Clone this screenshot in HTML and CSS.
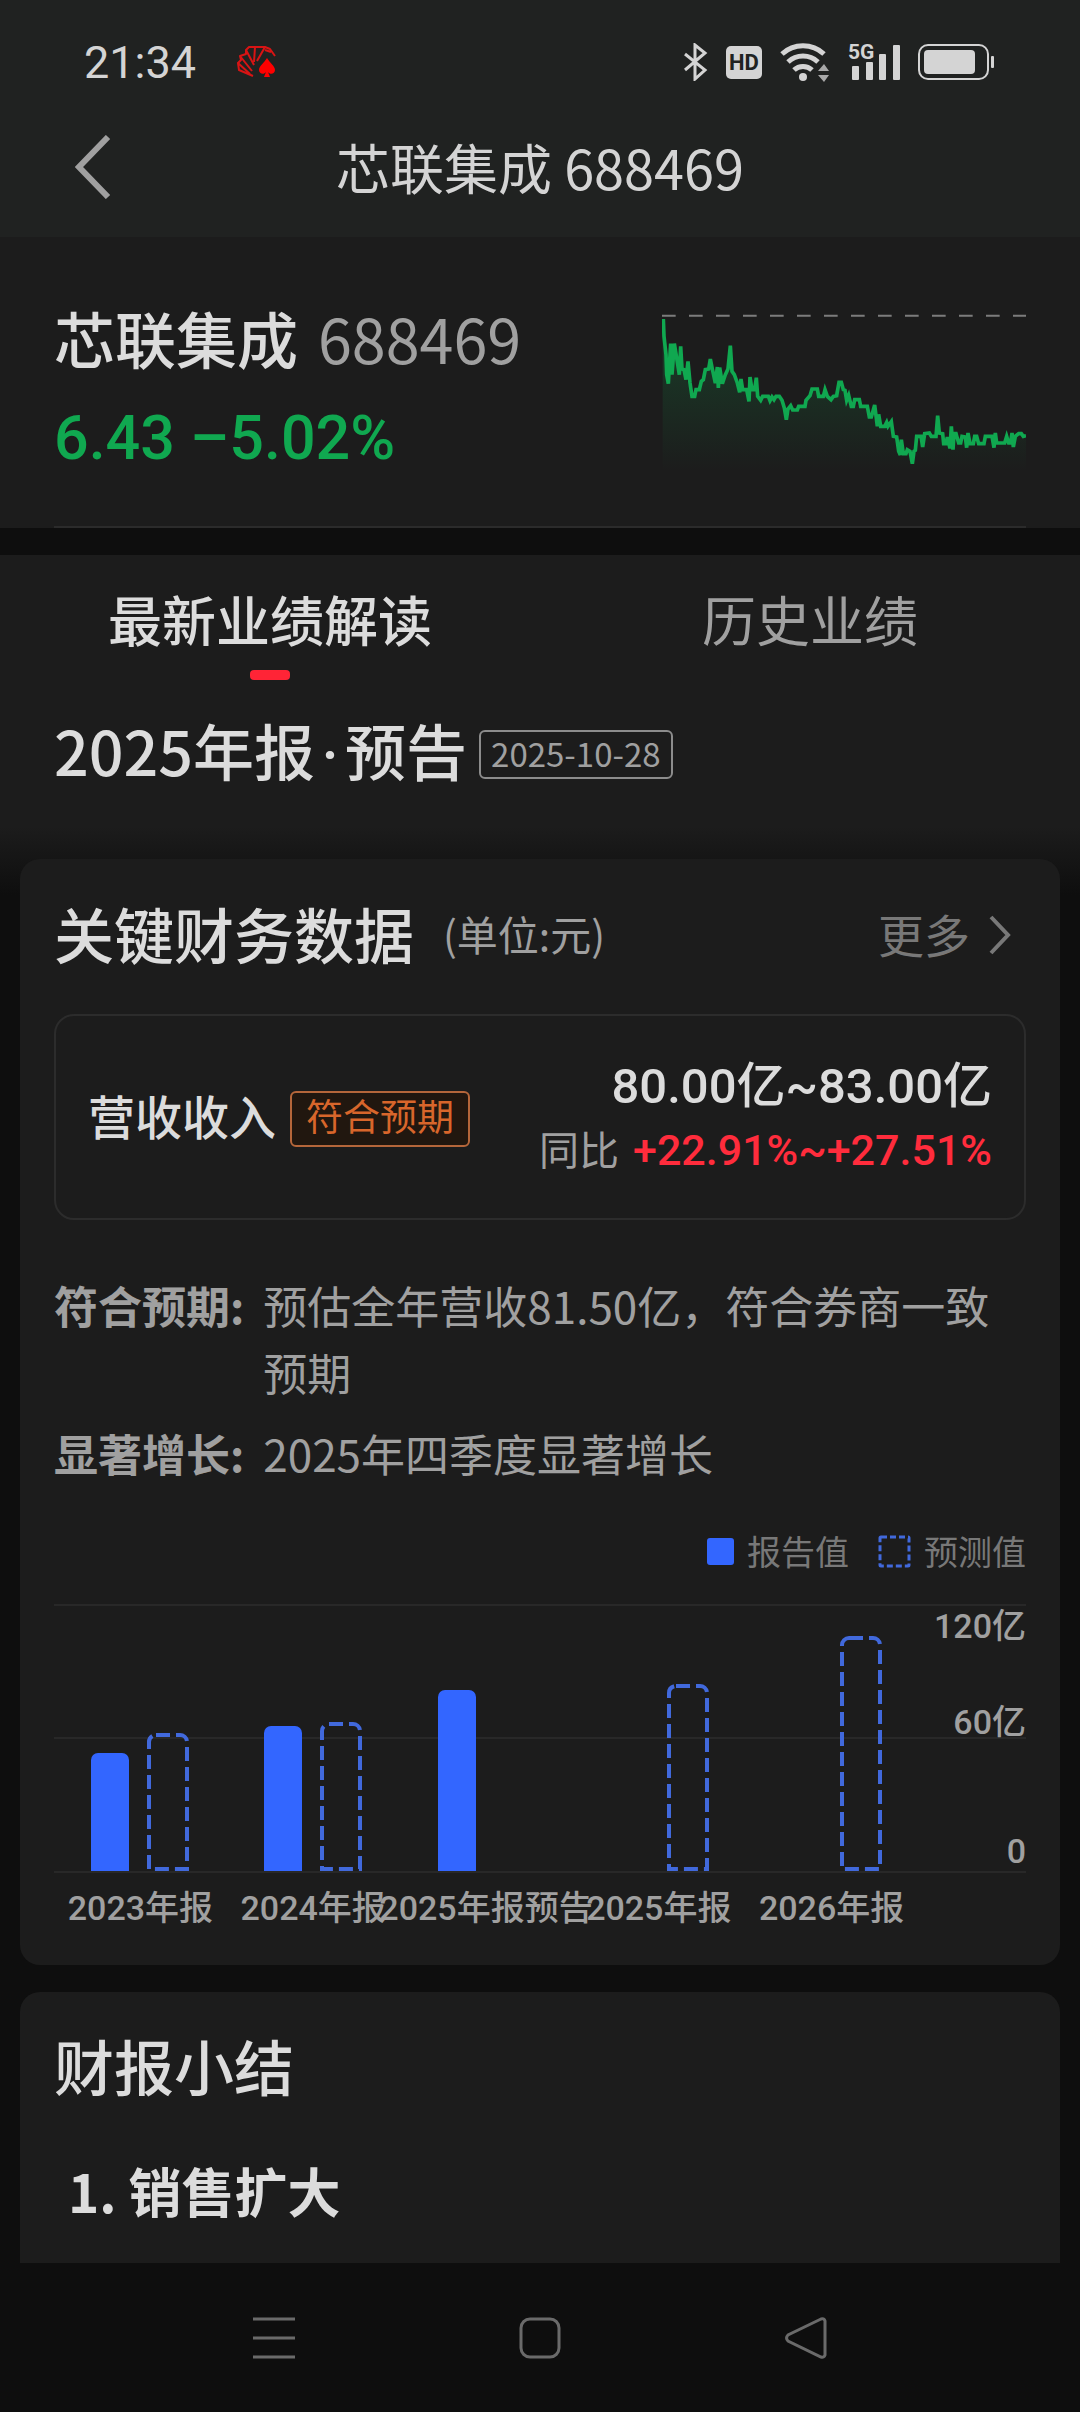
FILE: index.html
```html
<!DOCTYPE html>
<html lang="zh-CN">
<head>
    <meta charset="UTF-8">
    <meta name="viewport" content="width=device-width, initial-scale=1.0">
    <title>芯联集成 688469</title>
    <link rel="stylesheet" href="styles.css">
</head>
<body>
    <header class="top">
        <div class="status-bar">
            <span class="clock">21:34</span>
            <svg class="app-icon" width="40" height="34" viewBox="0 0 40 34">
                <g fill="none" stroke="#d81414" stroke-width="2" stroke-linejoin="round">
                    <path d="M16 31 2 25 1 18 13 29"/>
                    <path d="M1 18 4 15 3 11 15 26"/>
                    <path d="M3 11 9 9 9 5 17 20"/>
                    <path d="M9 5 12 2 18 2 17 17"/>
                    <path d="M18 2 28 2 20 16"/>
                    <path d="M28 2 33 4 38 11 M28 5 34 7"/>
                </g>
                <path fill="#ff0000" d="M30 13c3 5 8 8 8 12 0 4-5 5-7 2l2 5h-6l2-5c-2 3-7 2-7-2 0-4 5-7 8-12z"/>
            </svg>
            <div class="status-icons">
                <svg width="24" height="38" viewBox="0 0 24 38" fill="none" stroke="#d4d4d4" stroke-width="3">
                    <path d="M1 11 21 27 11 36V2l10 8L1 27"/>
                </svg>
                <span class="hd">HD</span>
                <svg width="50" height="40" viewBox="0 0 50 40">
                    <g fill="none" stroke="#d4d4d4" stroke-width="5">
                        <path d="M2 12a31 31 0 0 1 42 0"/>
                        <path d="M8 20a22 22 0 0 1 30 0"/>
                        <path d="M14 28a13 13 0 0 1 18 0"/>
                    </g>
                    <circle cx="23" cy="35" r="4" fill="#d4d4d4"/>
                    <path fill="#a8a8a8" d="M38 29h11l-5-7zM38 33h11l-5 7z"/>
                </svg>
                <div class="signal">
                    <span class="net">5G</span>
                    <svg width="48" height="35" viewBox="0 0 48 35" fill="#d4d4d4">
                        <rect x="0" y="21" width="7" height="14" rx="1"/>
                        <rect x="14" y="17" width="7" height="18" rx="1"/>
                        <rect x="27" y="9" width="7" height="26" rx="1"/>
                        <rect x="41" y="0" width="7" height="35" rx="1"/>
                    </svg>
                </div>
                <svg width="76" height="36" viewBox="0 0 76 36">
                    <rect x="1" y="1" width="69" height="34" rx="9" fill="none" stroke="#d4d4d4" stroke-width="2"/>
                    <rect x="6" y="6" width="51" height="24" rx="4" fill="#d4d4d4"/>
                    <rect x="73" y="12" width="3" height="12" rx="1" fill="#d4d4d4"/>
                </svg>
            </div>
        </div>
        <div class="title-bar">
            <button type="button" class="back" aria-label="返回">
                <svg width="36" height="64" viewBox="0 0 36 64" fill="none" stroke="#a0a0a0" stroke-width="6">
                    <path d="M33 2 4 32l29 30"/>
                </svg>
            </button>
            <h1>芯联集成 688469</h1>
        </div>
    </header>

    <section class="quote">
        <div class="quote-inner">
            <div>
                <p class="stock"><span class="stock-name">芯联集成</span><span class="stock-code">688469</span></p>
                <p class="price">6.43 –5.02%</p>
            </div>
            <svg class="sparkline" width="364" height="160" viewBox="66 100 1092 480">
                <defs>
                    <linearGradient id="fade" x1="0" y1="0" x2="0" y2="1">
                        <stop offset="0" stop-color="#10a850" stop-opacity="0.25"/>
                        <stop offset="1" stop-color="#10a850" stop-opacity="0"/>
                    </linearGradient>
                </defs>
                <path d="M66 108H1158" fill="none" stroke="#7c7c7c" stroke-width="6" stroke-dasharray="41 40"/>
                <path fill="url(#fade)" d="M68 118 80 285 103 200 132 270 156 350 184 305 206 268 247 300 271 270 299 330 344 330 362 362 418 350 439 405 458 391 495 380 516 328 573 360 600 308 634 380 682 380 694 412 722 440 754 440 770 472 790 522 817 530 830 470 888 470 918 492 976 472 1032 492 1158 468V576H68z"/>
                <polyline fill="none" stroke="#10a850" stroke-width="11" points="70,118 72,170 78,225 80,285 85,312 92,192 96,285 103,192 110,235 118,285 122,200 126,268 132,270 138,300 144,245 150,310 156,350 164,350 168,330 178,330 184,305 190,300 196,270 206,268 211,238 217,268 226,310 232,262 235,325 239,264 247,312 256,285 264,268 271,198 276,275 283,285 292,310 299,338 303,298 308,330 320,330 327,365 330,292 336,330 344,330 349,294 353,350 362,362 368,350 385,350 390,363 396,352 402,360 408,350 418,350 426,362 433,385 439,420 444,388 452,378 458,391 472,391 476,380 495,380 498,362 510,348 516,328 532,328 536,350 550,350 555,330 562,350 573,360 580,350 590,348 597,308 604,308 610,330 615,332 620,362 626,347 634,380 640,380 644,360 658,360 662,380 682,380 688,412 694,412 704,376 712,440 716,404 722,440 734,440 740,428 744,440 754,426 760,470 770,472 776,515 781,526 784,480 790,522 798,522 802,510 810,515 817,552 822,515 826,512 830,470 843,470 848,502 854,462 868,460 874,470 888,470 893,408 898,460 908,462 911,492 918,492 922,472 930,506 934,440 939,510 942,462 948,462 956,490 962,490 966,470 976,472 980,504 984,460 990,492 1000,492 1004,470 1010,470 1016,492 1032,492 1036,470 1056,470 1062,504 1066,460 1070,490 1094,490 1100,470 1106,490 1112,490 1116,460 1120,502 1126,470 1136,462 1144,462 1150,470 1158,468"/>
            </svg>
        </div>
    </section>

    <section class="report">
        <div class="tabs" role="tablist">
            <button type="button" class="tab active" role="tab" aria-selected="true">最新业绩解读</button>
            <button type="button" class="tab" role="tab" aria-selected="false">历史业绩</button>
        </div>
        <div class="report-title">
            <h2>2025年报<span class="dot">·</span>预告</h2>
            <span class="date">2025-10-28</span>
        </div>
    </section>

    <main class="cards">
        <section class="card finance">
            <div class="card-head">
                <h2>关键财务数据</h2>
                <span class="unit">(单位:元)</span>
                <a class="more" href="#">更多
                    <svg width="24" height="40" viewBox="0 0 24 40" fill="none" stroke="#787878" stroke-width="4">
                        <path d="M3 2l17 18L3 38"/>
                    </svg>
                </a>
            </div>

            <div class="revenue">
                <span class="revenue-name">营收收入</span>
                <span class="tag">符合预期</span>
                <div class="revenue-value">
                    <p class="amount">80.00亿~83.00亿</p>
                    <p class="yoy">同比 <span class="up">+22.91%~+27.51%</span></p>
                </div>
            </div>

            <dl class="notes">
                <dt>符合预期:</dt>
                <dd>预估全年营收81.50亿，符合券商一致预期</dd>
                <dt>显著增长:</dt>
                <dd>2025年四季度显著增长</dd>
            </dl>

            <div class="legend">
                <span class="key"></span>报告值
                <svg class="key-forecast" width="33" height="33" viewBox="0 0 33 33">
                    <rect x="2" y="2" width="29" height="29" rx="1" fill="none" stroke="#4169dc" stroke-width="3" stroke-dasharray="6 3"/>
                </svg>预测值
            </div>

            <div class="chart">
                <div class="plot">
                    <div class="group">
                        <div class="bar" style="height: 118px"></div>
                        <svg class="forecast" width="42" height="138"><path d="M9 2h24a7 7 0 0 1 7 7v127H2V9a7 7 0 0 1 7-7z"/></svg>
                    </div>
                    <div class="group">
                        <div class="bar" style="height: 145px"></div>
                        <svg class="forecast" width="42" height="149"><path d="M9 2h24a7 7 0 0 1 7 7v138H2V9a7 7 0 0 1 7-7z"/></svg>
                    </div>
                    <div class="group">
                        <div class="bar" style="height: 181px"></div>
                    </div>
                    <div class="group">
                        <svg class="forecast" width="42" height="187"><path d="M9 2h24a7 7 0 0 1 7 7v176H2V9a7 7 0 0 1 7-7z"/></svg>
                    </div>
                    <div class="group">
                        <svg class="forecast" width="42" height="235"><path d="M9 2h24a7 7 0 0 1 7 7v224H2V9a7 7 0 0 1 7-7z"/></svg>
                    </div>
                </div>
                <div class="y-axis">
                    <span>120亿</span>
                    <span class="y-mid">60亿</span>
                    <span class="y-zero">0</span>
                </div>
            </div>
            <div class="x-axis">
                <span>2023年报</span>
                <span>2024年报</span>
                <span>2025年报预告</span>
                <span>2025年报</span>
                <span>2026年报</span>
            </div>
        </section>

        <section class="card summary">
            <h2>财报小结</h2>
            <h3>1. 销售扩大</h3>
        </section>
    </main>

    <nav class="system-nav">
        <button type="button" aria-label="最近任务">
            <svg width="42" height="42" viewBox="0 0 42 42"><path d="M0 2h42M0 21h42M0 40h42"/></svg>
        </button>
        <button type="button" aria-label="主屏幕">
            <svg width="42" height="42" viewBox="0 0 42 42"><rect x="2" y="2" width="38" height="38" rx="9"/></svg>
        </button>
        <button type="button" aria-label="返回">
            <svg width="42" height="42" viewBox="0 0 42 42"><path d="M36 2 3 18q-3 3 0 6l33 16q3 1 4-2V4q-1-3-4-2z"/></svg>
        </button>
    </nav>
</body>
</html>
```
FILE: styles.css
```css
/* General Reset */
* {
    margin: 0;
    padding: 0;
    box-sizing: border-box;
}

body {
    min-height: 100vh;
    display: flex;
    flex-direction: column;
    background: #0e0e0e;
    color: #dcdcdc;
    font-family: "Noto Sans CJK SC", sans-serif;
}

button {
    background: none;
    border: none;
    color: inherit;
    font-family: inherit;
    cursor: pointer;
}

svg {
    display: block;
    flex-shrink: 0;
}

h1, h2, h3 {
    font-weight: 500;
}

/* Status Bar */
.top {
    background: #202221;
}

.status-bar {
    display: flex;
    align-items: center;
    height: 102px;
    padding: 22px 86px 0 84px;
    color: #d4d4d4;
    font-family: Roboto, sans-serif;
}

.clock {
    font-size: 45px;
}

.app-icon {
    margin-left: 41px;
}

.status-icons {
    display: flex;
    align-items: center;
    gap: 18px;
    margin-left: auto;
}

.hd {
    width: 36px;
    height: 33px;
    border-radius: 5px;
    background: #d4d4d4;
    color: #202221;
    font-size: 22px;
    font-weight: bold;
    line-height: 34px;
    text-align: center;
}

.signal {
    position: relative;
    padding-left: 4px;
}

.net {
    position: absolute;
    top: -5px;
    left: 0;
    font-size: 21px;
    font-weight: bold;
    line-height: 24px;
}

/* Title Bar */
.title-bar {
    display: grid;
    grid-template-columns: 1fr auto 1fr;
    align-items: center;
    height: 135px;
    padding: 0 75px 6px;
}

.back {
    justify-self: start;
}

.title-bar h1 {
    color: #d4d4d4;
    font-size: 54px;
    font-weight: 400;
    line-height: 80px;
}

/* Quote */
.quote {
    padding: 0 54px;
    background: #1c1c1c;
}

.quote-inner {
    display: flex;
    justify-content: space-between;
    align-items: flex-start;
    padding: 56px 0 33px;
    border-bottom: 2px solid #2b2b2b;
}

.stock {
    font-size: 61px;
    line-height: 90px;
}

.stock-name {
    margin-right: 20px;
    font-weight: 500;
}

.stock-code {
    color: #a0a0a0;
}

.price {
    color: #10a850;
    font-family: Roboto, sans-serif;
    font-size: 61px;
    font-weight: 500;
    line-height: 110px;
}

.sparkline {
    margin-top: 20px;
}

/* Report Header */
.report {
    margin-top: 27px;
    padding-bottom: 100px;
    background: linear-gradient(#1c1c1c 80%, #0e0e0e);
}

.tabs {
    display: flex;
}

.tab {
    flex: 1;
    padding-top: 12px;
    color: #a0a0a0;
    font-size: 54px;
    line-height: 103px;
}

.tab::after {
    content: "";
    display: block;
    width: 40px;
    height: 10px;
    margin: 0 auto;
    border-radius: 4px;
}

.tab.active {
    color: #dcdcdc;
    font-weight: 500;
}

.tab.active::after {
    background: #ff2436;
}

.report-title {
    display: flex;
    align-items: center;
    gap: 12px;
    padding: 25px 54px 0;
}

.report-title h2 {
    font-size: 61px;
    line-height: 90px;
}

.dot {
    display: inline-block;
    width: 30px;
    font-family: Roboto, sans-serif;
    line-height: 1;
    text-align: center;
}

.date {
    height: 49px;
    margin-top: 8px;
    padding: 0 10px;
    border: 2px solid #8c8c8c;
    border-radius: 6px;
    color: #a0a0a0;
    font-size: 33px;
    line-height: 42px;
}

/* Cards */
.cards {
    flex: 1;
    display: flex;
    flex-direction: column;
    gap: 27px;
    margin-top: -36px;
    padding: 0 20px;
}

.card {
    padding: 0 34px;
    border-radius: 20px;
    background: #1c1c1c;
}

.card h2 {
    font-size: 60px;
    line-height: 90px;
}

.card-head {
    display: flex;
    align-items: center;
    padding: 29px 0 36px;
}

.unit {
    margin-left: 29px;
    color: #a0a0a0;
    font-size: 41px;
    line-height: 60px;
}

.more {
    display: flex;
    align-items: center;
    gap: 18px;
    margin-left: auto;
    padding-right: 14px;
    color: #787878;
    font-size: 46px;
    line-height: 60px;
    text-decoration: none;
}

.more svg {
    margin-top: 4px;
}

.revenue {
    display: flex;
    align-items: center;
    padding: 39px 32px 35px;
    border: 2px solid #2c2c2c;
    border-radius: 20px;
}

.revenue-name {
    padding-bottom: 8px;
    font-size: 47px;
    font-weight: 500;
    line-height: 60px;
}

.tag {
    margin-left: 14px;
    height: 56px;
    padding: 0 14px;
    border: 2px solid #b5663a;
    border-radius: 6px;
    background: #21170f;
    color: #d8662b;
    font-size: 37px;
    line-height: 44px;
}

.revenue-value {
    margin-left: auto;
    font-family: Roboto, "Noto Sans CJK SC", sans-serif;
    text-align: right;
}

.amount {
    font-size: 49px;
    font-weight: 500;
    line-height: 64px;
}

.yoy {
    color: #a0a0a0;
    font-size: 40px;
    line-height: 62px;
}

.up {
    margin-left: 4px;
    color: #ff2c3c;
    font-size: 43px;
    font-weight: 500;
}

.notes {
    display: grid;
    grid-template-columns: auto 1fr;
    gap: 14px 19px;
    padding-top: 52px;
    color: #a0a0a0;
    font-size: 44px;
    line-height: 67px;
}

.notes dt {
    font-weight: bold;
}

/* Chart */
.legend {
    display: flex;
    justify-content: flex-end;
    align-items: center;
    gap: 13px;
    padding: 39px 0 28px;
    color: #787878;
    font-size: 34px;
    line-height: 50px;
}

.key {
    width: 27px;
    height: 27px;
    border-radius: 3px;
    background: #3366ff;
}

.key-forecast {
    margin-left: 16px;
}

.chart {
    display: flex;
    height: 269px;
    border-bottom: 2px solid #282828;
    background: linear-gradient(#282828, #282828) 0 131px / 100% 2px no-repeat;
    border-top: 2px solid #282828;
}

.plot {
    flex: 8;
    display: flex;
}

.group {
    flex: 1;
    display: flex;
    justify-content: center;
    align-items: flex-end;
    gap: 18px;
}

.group .bar:only-child {
    margin-right: 58px;
}

.group .forecast:only-child {
    margin-left: 58px;
}

.bar {
    width: 38px;
    border-radius: 7px 7px 0 0;
    background: #3366ff;
}

.forecast {
    fill: none;
    stroke: #4169dc;
    stroke-width: 4;
    stroke-dasharray: 14 6;
}

.y-axis {
    flex: 1;
    display: flex;
    flex-direction: column;
    align-items: flex-end;
}

.y-mid {
    margin-top: 56px;
}

.y-zero {
    margin-top: auto;
}

.y-axis,
.x-axis {
    color: #a0a0a0;
    font-family: Roboto, "Noto Sans CJK SC", sans-serif;
    font-size: 34px;
    font-weight: 500;
    line-height: 40px;
    white-space: nowrap;
}

.x-axis {
    display: flex;
    padding: 15px 108px 37px 0;
}

.x-axis span {
    flex: 1 0 0;
    display: flex;
    justify-content: center;
    min-width: 0;
}

/* Summary */
.summary {
    flex: 1;
    padding-top: 28px;
    padding-bottom: 30px;
    border-radius: 20px 20px 0 0;
}

.summary h3 {
    padding: 40px 14px 0;
    font-size: 53px;
    font-weight: bold;
    line-height: 80px;
}

/* System Navigation */
.system-nav {
    position: sticky;
    bottom: 0;
    display: flex;
    justify-content: space-around;
    align-items: center;
    height: 149px;
    padding: 0 13%;
    background: #0e0e0e;
}

.system-nav svg {
    fill: none;
    stroke: #6a6a6a;
    stroke-width: 3;
}
```
